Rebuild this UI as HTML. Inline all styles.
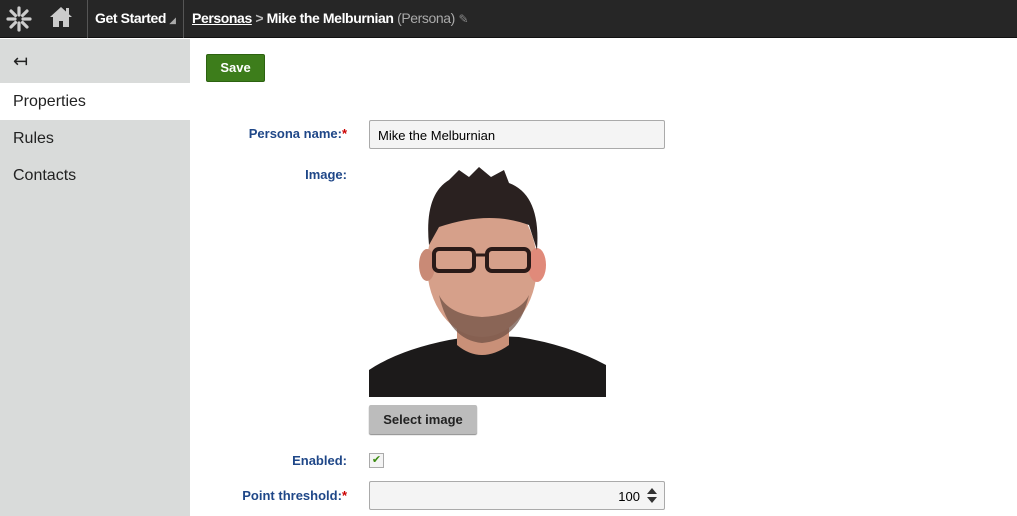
<!DOCTYPE html>
<html><head><style>
*{margin:0;padding:0;box-sizing:border-box}
body{width:1017px;height:516px;overflow:hidden;background:#fff;font-family:"Liberation Sans",Arial,sans-serif;position:relative}
.top{position:absolute;left:0;top:0;width:1017px;height:38px;background:#262626;border-bottom:1px solid #111}
.sep{position:absolute;top:0;width:1px;height:38px;background:#555}
.tt{position:absolute;top:10px;color:#fff;font-weight:bold;font-size:14px;letter-spacing:-0.4px}
.side{position:absolute;left:0;top:39px;width:190px;height:477px;background:#d9dbda}
.side .it{position:absolute;left:13px;font-size:16px;color:#222}
.sel{position:absolute;left:0;top:44px;width:190px;height:37px;background:#fff}
.lbl{position:absolute;right:670px;font-size:13px;font-weight:bold;color:#1f4788;text-align:right}
.lbl i{color:#c00;font-style:normal}
.inp{position:absolute;left:369px;width:296px;height:29px;border:1px solid #aaa;border-radius:2px;background:#f4f4f4;font-size:13px}
</style></head><body>
<div class="top">
<svg style="position:absolute;left:6px;top:6px" width="26" height="26" viewBox="0 0 26 26"><g stroke="#ccc" stroke-width="3.2" stroke-linecap="round"><line x1="13" y1="2" x2="13" y2="9"/><line x1="13" y1="17" x2="13" y2="24"/><line x1="2" y1="13" x2="9" y2="13"/><line x1="17" y1="13" x2="24" y2="13"/><line x1="5" y1="5" x2="9.5" y2="9.5"/><line x1="16.5" y1="16.5" x2="21" y2="21"/><line x1="21" y1="5" x2="16.5" y2="9.5"/><line x1="9.5" y1="16.5" x2="5" y2="21"/></g></svg>
<svg style="position:absolute;left:49px;top:6px" width="24" height="22" viewBox="0 0 24 22"><path d="M12 1 L1 11 L4 11 L4 21 L10 21 L10 15 L14 15 L14 21 L20 21 L20 11 L23 11 Z" fill="#ccc"/><rect x="17" y="2" width="3" height="6" fill="#ccc"/></svg>
<div class="sep" style="left:87px"></div>
<div class="tt" style="left:95px">Get Started <span style="font-size:8px;color:#aaa">◢</span></div>
<div class="sep" style="left:183px"></div>
<div class="tt" style="left:192px"><span style="text-decoration:underline">Personas</span> <span style="color:#bbb">&gt;</span> Mike the Melburnian <span style="color:#aaa;font-weight:normal">(Persona)</span> <span style="color:#888;font-weight:normal;font-size:12px">✎</span></div>
</div>
<div class="side">
<div class="it" style="top:12px;font-size:18px">↤</div>
<div class="sel"></div>
<div class="it" style="top:54px">Properties</div>
<div class="it" style="top:91px">Rules</div>
<div class="it" style="top:128px">Contacts</div>
</div>
<div style="position:absolute;left:206px;top:54px;width:59px;height:28px;background:#3d7d1b;border:1px solid #2c6210;border-radius:2px;color:#fff;font-weight:bold;font-size:13px;text-align:center;line-height:26px">Save</div>
<div class="lbl" style="top:126px">Persona name:<i>*</i></div>
<div class="inp" style="top:120px;padding:7px 8px">Mike the Melburnian</div>
<div class="lbl" style="top:167px">Image:</div>
<svg style="position:absolute;left:369px;top:165px" width="237" height="232" viewBox="0 0 237 232">
<path d="M0 205 Q30 185 80 175 L110 170 L150 172 Q200 180 237 200 L237 232 L0 232 Z" fill="#1c1a1a"/>
<path d="M88 140 L88 180 Q112 200 140 180 L140 140 Z" fill="#c99078"/>
<ellipse cx="113" cy="100" rx="55" ry="72" fill="#d6a08a"/>
<ellipse cx="58" cy="100" rx="8" ry="16" fill="#c98a76"/>
<ellipse cx="168" cy="100" rx="9" ry="17" fill="#e08a7a"/>
<path d="M60 80 Q55 30 80 15 L90 5 L100 12 L110 2 L122 12 L135 5 L140 18 Q172 30 168 85 L160 60 Q120 45 70 62 Z" fill="#2a2120"/>
<path d="M70 130 Q80 175 113 178 Q150 175 160 130 Q150 150 113 152 Q80 150 70 130 Z" fill="#6a4c40" opacity=".7"/>
<rect x="65" y="84" width="40" height="22" rx="5" fill="none" stroke="#2a1a18" stroke-width="4"/>
<rect x="118" y="84" width="42" height="22" rx="5" fill="none" stroke="#2a1a18" stroke-width="4"/>
<line x1="105" y1="90" x2="118" y2="90" stroke="#2a1a18" stroke-width="3"/>
</svg>
<div style="position:absolute;left:369px;top:405px;width:108px;height:29px;background:#bcbcbc;border-radius:2px;box-shadow:0 1px 1px #888;font-weight:bold;font-size:13px;text-align:center;line-height:29px;color:#222">Select image</div>
<div class="lbl" style="top:453px">Enabled:</div>
<div style="position:absolute;left:369px;top:453px;width:15px;height:15px;border:1px solid #aaa;background:#f4f4f4;color:#3a8a10;font-size:11px;line-height:13px;text-align:center">✔</div>
<div class="lbl" style="top:488px">Point threshold:<i>*</i></div>
<div class="inp" style="top:481px;text-align:right;padding:7px 24px 0 0">100</div>
<svg style="position:absolute;left:646px;top:487px" width="12" height="17" viewBox="0 0 12 17"><path d="M1 7 L6 1 L11 7Z M1 10 L6 16 L11 10Z" fill="#333"/></svg>
</body></html>
